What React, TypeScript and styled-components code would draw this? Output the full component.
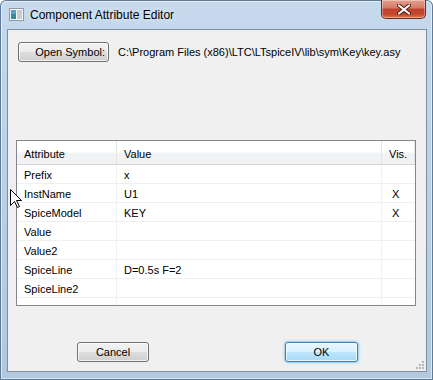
import React from 'react';
import styled, { createGlobalStyle } from 'styled-components';

const GlobalStyle = createGlobalStyle`
  html, body {
    margin: 0;
    padding: 0;
    background: #ffffff;
  }
  body {
    font-family: "Liberation Sans", Arial, sans-serif;
    font-size: 11px;
    color: #000;
  }
`;

const Window = styled.div`
  position: relative;
  width: 433px;
  height: 380px;
  box-sizing: border-box;
  display: flex;
  flex-direction: column;
  padding: 0 6px 8px 7px;
  background: linear-gradient(180deg, #c6d9ed 0%, #bcd1e7 40%, #b2c8df 100%);
  border-radius: 6px 6px 0 0;
  box-shadow: inset 0 0 0 1px #5e7b9a, inset 0 0 0 2px rgba(255, 255, 255, 0.55);
  overflow: hidden;
`;

const TitleBar = styled.div`
  height: 29px;
  display: flex;
  align-items: center;
  padding-left: 2px;
`;

const TitleText = styled.span`
  margin-left: 6px;
  font-size: 12px;
  color: #000;
  text-shadow: 0 0 6px rgba(255, 255, 255, 0.9);
`;

const CloseButton = styled.div`
  margin-left: auto;
  margin-right: 1px;
  align-self: flex-start;
  width: 45px;
  height: 19px;
  box-sizing: border-box;
  border: 1px solid #6b2b24;
  border-top: none;
  border-radius: 0 0 5px 5px;
  background: linear-gradient(180deg, #e4a08f 0%, #d77866 45%, #c0412c 50%, #c8482d 80%, #e07a4e 100%);
  box-shadow: inset 0 0 0 1px rgba(255, 255, 255, 0.35);
  display: flex;
  align-items: center;
  justify-content: center;
`;

const Client = styled.div`
  position: relative;
  flex: 1;
  display: flex;
  flex-direction: column;
  border: 1px solid #7d8ea1;
  background: #f0f0f0;
`;

const TopRow = styled.div`
  display: flex;
  align-items: center;
  gap: 9px;
  margin: 12px 0 0 10px;
`;

const Button = styled.button<{ $primary?: boolean; $width: number; $align?: string }>`
  width: ${p => p.$width}px;
  height: 20px;
  box-sizing: border-box;
  padding: 0 3px;
  font-family: "Liberation Sans", Arial, sans-serif;
  font-size: 11px;
  color: #000;
  text-align: ${p => p.$align || 'center'};
  border-radius: 3px;
  border: 1px solid ${p => (p.$primary ? '#3c7fb1' : '#707070')};
  background: ${p =>
    p.$primary
      ? 'linear-gradient(180deg, #eaf6fd 0%, #d9f0fc 50%, #bee6fd 51%, #a7d9f5 100%)'
      : 'linear-gradient(180deg, #f2f2f2 0%, #ebebeb 50%, #dddddd 51%, #cfcfcf 100%)'};
  box-shadow: inset 0 0 0 1px rgba(255, 255, 255, 0.75)
    ${p => (p.$primary ? ', 0 0 2px 1px rgba(80, 180, 240, 0.6)' : '')};
`;

const PathText = styled.span`
  white-space: nowrap;
`;

const Table = styled.div`
  margin: 78px 10px 0 8px;
  height: 166px;
  box-sizing: border-box;
  border: 1px solid #828790;
  background: #fff;
  display: flex;
  flex-direction: column;
  overflow: hidden;
`;

const HeaderRow = styled.div`
  display: grid;
  grid-template-columns: 100px 265px 1fr;
  height: 24px;
  box-sizing: border-box;
  border-bottom: 1px solid #d5d5d5;
  background: linear-gradient(180deg, #ffffff 0%, #ffffff 45%, #f1f2f4 55%, #f1f2f4 100%);
`;

const HeaderCell = styled.div`
  padding: 2px 0 0 7px;
  display: flex;
  align-items: center;
  border-right: 1px solid #e3e5e7;
`;

const Row = styled.div`
  display: grid;
  grid-template-columns: 100px 265px 1fr;
  height: 19px;
  box-sizing: border-box;
  border-bottom: 1px solid #f0f0f0;
`;

const Cell = styled.div<{ $vis?: boolean }>`
  padding: 2px 0 0 ${p => (p.$vis ? 10 : 7)}px;
  line-height: 16px;
  white-space: nowrap;
  border-right: ${p => (p.$vis ? 'none' : '1px solid #f0f0f0')};
`;

const Filler = styled(Row)`
  flex: 1;
  border-bottom: none;
`;

const Footer = styled.div`
  display: flex;
  gap: 136px;
  margin: 36px 0 0 69px;
`;

const Grip = styled.svg`
  position: absolute;
  right: 2px;
  bottom: 2px;
`;

const Cursor = styled.svg`
  position: absolute;
  left: 10px;
  top: 189px;
`;

const rows = [
  { name: 'Prefix', value: 'x', vis: '' },
  { name: 'InstName', value: 'U1', vis: 'X' },
  { name: 'SpiceModel', value: 'KEY', vis: 'X' },
  { name: 'Value', value: '', vis: '' },
  { name: 'Value2', value: '', vis: '' },
  { name: 'SpiceLine', value: 'D=0.5s F=2', vis: '' },
  { name: 'SpiceLine2', value: '', vis: '' },
];

const AppIcon = () => (
  <svg width="15" height="13" viewBox="0 0 15 13">
    <rect x="0.5" y="0.5" width="14" height="12" fill="#f4f6f8" stroke="#8a9aaa" />
    <rect x="2" y="2" width="5" height="9" fill="#3a8a9a" />
    <rect x="2" y="2" width="5" height="4" fill="#5aa0c8" />
    <rect x="8" y="2" width="5" height="9" fill="#c8ccd2" />
  </svg>
);

export default function App() {
  return (
    <>
      <GlobalStyle />
      <Window>
        <TitleBar>
          <AppIcon />
          <TitleText>Component Attribute Editor</TitleText>
          <CloseButton>
            <svg width="14" height="11" viewBox="0 0 14 11">
              <path d="M2 1.5 L12 9.5 M12 1.5 L2 9.5" stroke="#4a1a14" strokeWidth="4" strokeLinecap="round" />
              <path d="M2 1.5 L12 9.5 M12 1.5 L2 9.5" stroke="#ffffff" strokeWidth="2.2" strokeLinecap="round" />
            </svg>
          </CloseButton>
        </TitleBar>
        <Client>
          <TopRow>
            <Button $width={91} $align="right">Open Symbol:</Button>
            <PathText>C:\Program Files (x86)\LTC\LTspiceIV\lib\sym\Key\key.asy</PathText>
          </TopRow>
          <Table>
            <HeaderRow>
              <HeaderCell>Attribute</HeaderCell>
              <HeaderCell>Value</HeaderCell>
              <HeaderCell>Vis.</HeaderCell>
            </HeaderRow>
            {rows.map(r => (
              <Row key={r.name}>
                <Cell>{r.name}</Cell>
                <Cell>{r.value}</Cell>
                <Cell $vis>{r.vis}</Cell>
              </Row>
            ))}
            <Filler>
              <Cell />
              <Cell />
              <Cell $vis />
            </Filler>
          </Table>
          <Footer>
            <Button $width={72}>Cancel</Button>
            <Button $width={73} $primary>OK</Button>
          </Footer>
          <Grip width="9" height="9" viewBox="0 0 9 9">
            {[[7, 1], [4, 4], [7, 4], [1, 7], [4, 7], [7, 7]].map(([x, y]) => (
              <rect key={`${x}-${y}`} x={x} y={y} width="2" height="2" fill="#b8b8b8" />
            ))}
          </Grip>
        </Client>
        <Cursor width="13" height="20" viewBox="0 0 13 20">
          <path d="M0.5 0.5 L0.5 16.5 L4.5 12.5 L7.5 18.5 L9.5 17.5 L6.5 11.5 L11.5 11.5 Z" fill="#fff" stroke="#000" strokeWidth="1" />
        </Cursor>
      </Window>
    </>
  );
}
